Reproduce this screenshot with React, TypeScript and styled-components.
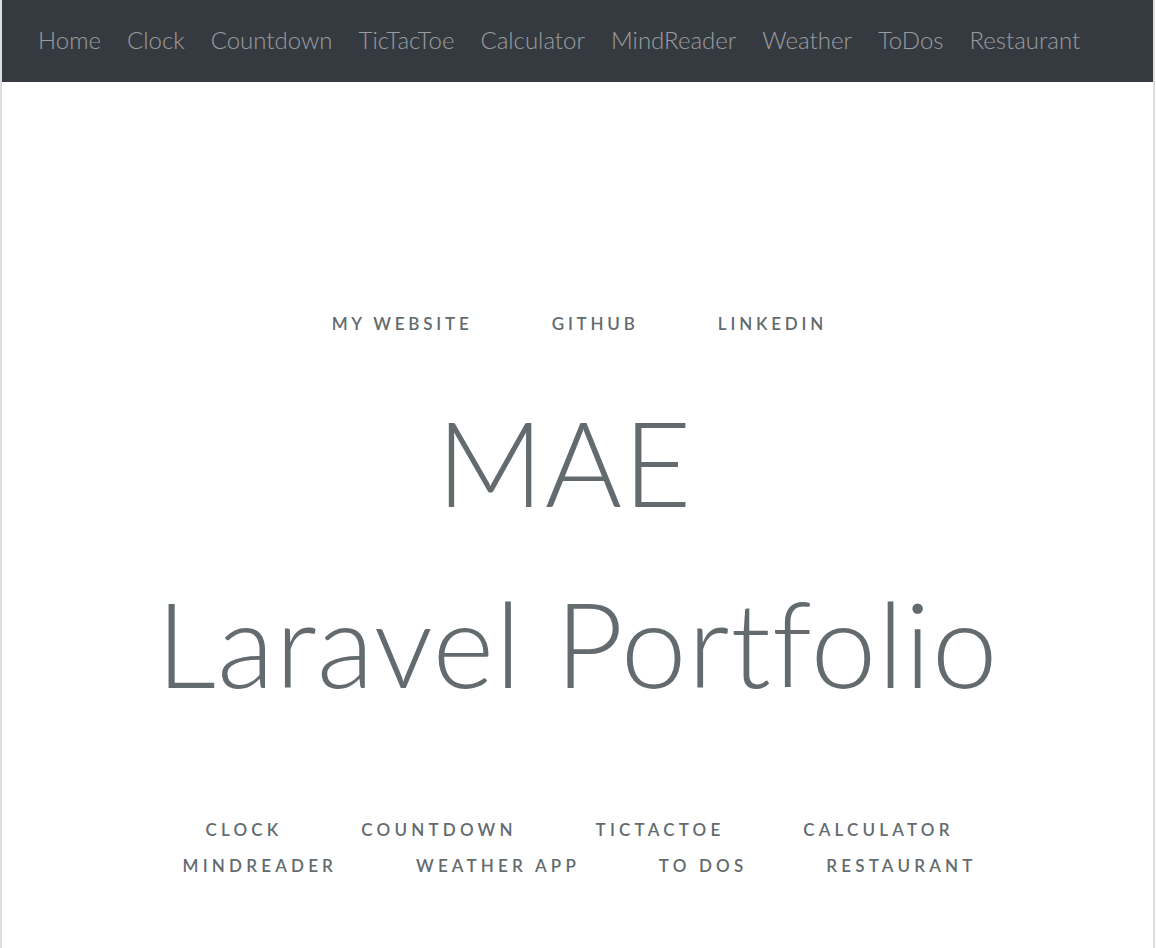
import React from "react";
import styled, { createGlobalStyle } from "styled-components";

const Global = createGlobalStyle`
  html, body { margin: 0; padding: 0; background: #fff; }
  body {
    font-family: "Lato", "Noto Sans", sans-serif;
    border-left: 2px solid #dedede;
    border-right: 2px solid #dedede;
    margin-right: 1px;
    min-height: 948px;
    box-sizing: border-box;
  }
`;

const Page = styled.div`
  display: flex;
  flex-direction: column;
  min-height: 948px;
`;

const NavBar = styled.nav`
  height: 82px;
  background: #343a40;
  display: flex;
  align-items: center;
  padding-left: 36px;
  padding-bottom: 2px;
  gap: 26px;
  box-sizing: border-box;
`;

const NavLink = styled.a`
  color: rgba(255, 255, 255, 0.5);
  font-size: 24px;
  font-weight: 300;
  text-decoration: none;
  line-height: 1;
`;

const Content = styled.main`
  display: flex;
  flex-direction: column;
  align-items: center;
  color: #636b6f;
  padding-top: 224px;
`;

const LinkRow = styled.div<{ $gap: number }>`
  display: flex;
  justify-content: center;
  gap: ${(p) => p.$gap}px;
  line-height: 36px;
`;

const Link = styled.a<{ $ls: number }>`
  color: #636b6f;
  font-size: 17px;
  font-weight: 600;
  letter-spacing: ${(p) => p.$ls}px;
  text-transform: uppercase;
  text-decoration: none;
  margin-right: ${(p) => -p.$ls}px;
`;

const Title = styled.div<{ $mt: number; $shift?: number }>`
  font-size: 118px;
  font-weight: 300;
  letter-spacing: 1px;
  line-height: 1;
  margin-top: ${(p) => p.$mt}px;
  padding-right: ${(p) => p.$shift ?? 0}px;
  white-space: nowrap;
`;

const Bottom = styled.div`
  margin-top: 110px;
  display: flex;
  flex-direction: column;
  align-items: center;
`;

const nav = ["Home", "Clock", "Countdown", "TicTacToe", "Calculator", "MindReader", "Weather", "ToDos", "Restaurant"];
const top = ["My Website", "Github", "LinkedIn"];
const row1 = ["Clock", "Countdown", "TicTacToe", "Calculator"];
const row2 = ["MindReader", "Weather App", "To Dos", "Restaurant"];

export default function App() {
  return (
    <>
      <Global />
      <Page>
        <NavBar>
          {nav.map((n) => (
            <NavLink key={n} href="#">{n}</NavLink>
          ))}
        </NavBar>
        <Content>
          <LinkRow $gap={83}>
            {top.map((t) => (
              <Link key={t} href="#" $ls={3.8}>{t}</Link>
            ))}
          </LinkRow>
          <Title $mt={61} $shift={26}>MAE</Title>
          <Title $mt={63}>Laravel Portfolio</Title>
          <Bottom>
            <LinkRow $gap={83}>
              {row1.map((t) => (
                <Link key={t} href="#" $ls={4.2}>{t}</Link>
              ))}
            </LinkRow>
            <LinkRow $gap={83}>
              {row2.map((t) => (
                <Link key={t} href="#" $ls={4.2}>{t}</Link>
              ))}
            </LinkRow>
          </Bottom>
        </Content>
      </Page>
    </>
  );
}
